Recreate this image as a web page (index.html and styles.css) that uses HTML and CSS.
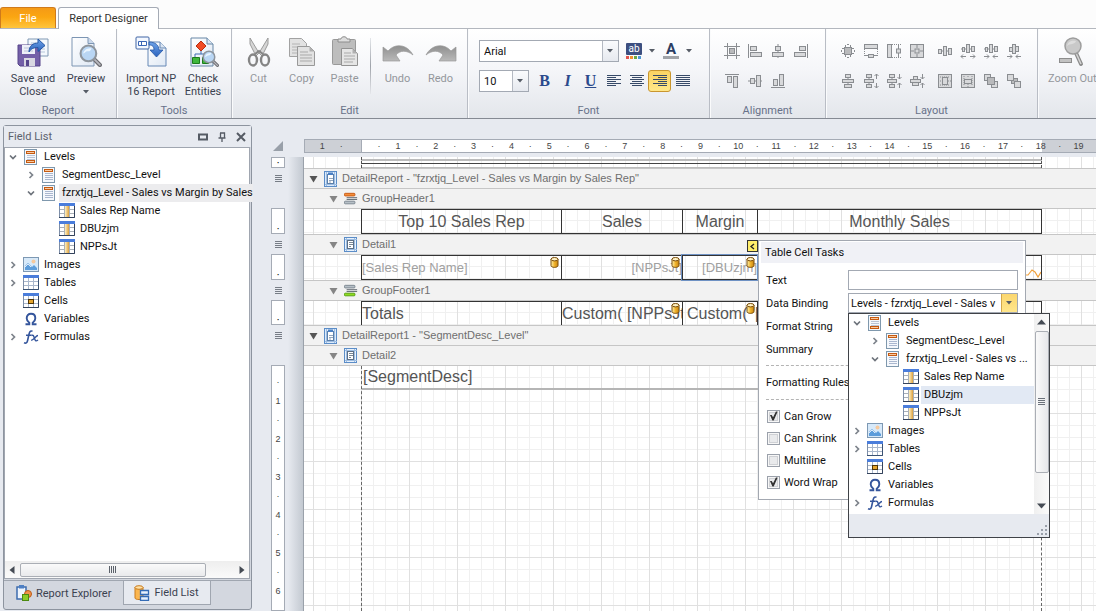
FILE: index.html
```html
<!DOCTYPE html>
<html lang="en">
<head>
<meta charset="utf-8">
<title>Report Designer</title>
<link rel="stylesheet" href="styles.css">
</head>
<body>
<svg class="defs" aria-hidden="true">
  <defs>
    <linearGradient id="gBlue" x1="0" y1="0" x2="0" y2="1"><stop offset="0" stop-color="#6fa4ea"/><stop offset="1" stop-color="#2a62bd"/></linearGradient>
    <linearGradient id="gPage" x1="0" y1="0" x2="1" y2="1"><stop offset="0" stop-color="#fff"/><stop offset="1" stop-color="#dfe8f4"/></linearGradient>
    <linearGradient id="gGold" x1="0" y1="0" x2="1" y2="0"><stop offset="0" stop-color="#fff3b0"/><stop offset=".5" stop-color="#f0b32c"/><stop offset="1" stop-color="#c98512"/></linearGradient>
    <linearGradient id="gSand" x1="0" y1="0" x2="1" y2="0"><stop offset="0" stop-color="#fff0c0"/><stop offset="1" stop-color="#dca040"/></linearGradient>
    <linearGradient id="gGray" x1="0" y1="0" x2="0" y2="1"><stop offset="0" stop-color="#8f8f8f"/><stop offset="1" stop-color="#b9b9b9"/></linearGradient>
  </defs>
  <symbol id="levels" viewBox="0 0 16 16"><rect x="1.500" y=".5" width="12" height="15" fill="#f5f8fc" stroke="#7f98ad"/><path d="M4 6.500h8M4 8.500h8M4 10.500h8" stroke="#b9c4d6"/><rect x="3.500" y="2.500" width="8" height="2" fill="#f8c9a0" stroke="#c55a11"/><rect x="3.500" y="11.500" width="8" height="2" fill="#f8c9a0" stroke="#c55a11"/></symbol>
  <symbol id="level" viewBox="0 0 16 16"><rect x="1.500" y=".5" width="12" height="15" fill="#f5f8fc" stroke="#7f98ad"/><path d="M4 6.500h8M4 8.500h8M4 10.500h8M4 12.500h8" stroke="#aab7cf"/><rect x="3.500" y="2.500" width="8" height="2" fill="#f8c9a0" stroke="#c55a11"/></symbol>
  <symbol id="tbl" viewBox="0 0 16 16"><rect x=".5" y=".5" width="15" height="14" fill="#fff" stroke="#7d8ea8"/><path d="M1 6.500h14M1 10.500h14M5.500 3v12M10.500 3v12" stroke="#a9b7cc"/><path d="M15.500 3v11.500H0" fill="none" stroke="#3a5273"/><rect width="16" height="3" fill="#4a7ddb"/></symbol>
  <symbol id="col" viewBox="0 0 16 16"><rect x=".5" y=".5" width="15" height="14" fill="#fff" stroke="#7d8ea8"/><path d="M1 6.500h14M1 10.500h14M5.500 3v12M10.500 3v12" stroke="#a9b0b8"/><rect x="6" y="3" width="4" height="11" fill="url(#gSand)"/><path d="M15.500 3v11.500H0" fill="none" stroke="#34435c"/><rect width="16" height="3" fill="#4a7ddb"/></symbol>
  <symbol id="cell" viewBox="0 0 16 16"><rect x=".5" y=".5" width="15" height="14" fill="#fff" stroke="#7d8ea8"/><path d="M1 6.500h14M1 10.500h14M5.500 3v12M10.500 3v12" stroke="#a9b7cc"/><path d="M15.500 3v11.500H0" fill="none" stroke="#34435c"/><rect width="16" height="3" fill="#4a7ddb"/><rect x="5.500" y="6.500" width="5" height="4" fill="#e4a42d" stroke="#4f3508"/></symbol>
  <symbol id="img" viewBox="0 0 16 16"><rect x=".5" y=".5" width="15" height="14" fill="#d7e9f9" stroke="#7d98b3"/><circle cx="10.500" cy="4.500" r="2" fill="#f6c99d"/><path d="M2 13V9l3-3 4 4 2-2 3 3v2z" fill="#5d9ddb"/><path d="M2 10l3-3 3 3" fill="none" stroke="#fff" stroke-width=".8"/></symbol>
  <symbol id="omega" viewBox="0 0 16 16"><path d="M2.500 13.200h3.800v-1.500C4.500 10.500 3.700 9 3.700 7.200 3.700 4.500 5.500 2.800 8 2.800s4.300 1.700 4.300 4.400c0 1.800-.8 3.300-2.600 4.500v1.500h3.800" fill="none" stroke="#34559c" stroke-width="1.900"/></symbol>
  <symbol id="fx" viewBox="0 0 16 16"><path d="M9.500 2.300C7 1.300 6.400 3 5.800 6L4.600 11.500C4.100 14 3 14.600 1 13.800M3 6.300h5.500" fill="none" stroke="#34559c" stroke-width="1.600"/><path d="M8.500 6.500c2-1 2.200.5 3 3 .8 2.600 1.500 3 3.500 1.500M15 6.500c-2 0-4.500 5-6.800 4.800" fill="none" stroke="#34559c" stroke-width="1.400"/></symbol>
  <symbol id="open" viewBox="0 0 8 8"><path d="M1 2.500l3 3 3-3" fill="none" stroke="#6d737b" stroke-width="1.700"/></symbol>
  <symbol id="shut" viewBox="0 0 8 8"><path d="M2.500 1l3 3-3 3" fill="none" stroke="#7d838b" stroke-width="1.700"/></symbol>
  <symbol id="db" viewBox="0 0 9 11"><path d="M1 2v6.500C1 11 8 11 8 8.500V2" fill="url(#gGold)" stroke="#7a4c08"/><ellipse cx="4.500" cy="2.200" rx="3.500" ry="1.700" fill="#fff2c4" stroke="#7a4c08"/></symbol>
  <symbol id="down" viewBox="0 0 7 4"><path d="M0 0h6L3 3.500z" fill="#565c66"/></symbol>
  <symbol id="tri" viewBox="0 0 9 8"><path d="M.5 1h8L4.500 7.500z" fill="currentColor"/></symbol>
  <symbol id="report" viewBox="0 0 14 16"><rect x=".5" y=".5" width="12" height="15" fill="#dceafa" stroke="#5b8dc8"/><path d="M2.500 1v14M10.500 1v14M1 13.500h12" stroke="#9dbde2"/><rect x="3.500" y="3.500" width="6" height="9" fill="#fff" stroke="#5c7fa8"/><path d="M5 7.500h4M5 9.500h4M5 11h2" stroke="#7790ad" stroke-width=".8"/><rect x="4" y="1.500" width="5" height="2.500" fill="#4a80c4"/></symbol>
  <symbol id="detail" viewBox="0 0 14 16"><rect x=".5" y=".5" width="12" height="14" fill="#e8f1fb" stroke="#5b8dc8"/><path d="M2.500 1v13M10.500 1v13M1 2.500h12M1 12.500h12" stroke="#9dbde2"/><rect x="3.500" y="3.500" width="6" height="8" fill="#fff" stroke="#5c6e84"/><path d="M5 5.500h4M5 7.500h4M5 9.500h2" stroke="#7a8794"/></symbol>
  <symbol id="ghead" viewBox="0 0 16 14"><rect x=".5" y=".5" width="12" height="3" rx="1" fill="#f38f3c" stroke="#c5520c"/><path d="M3 5.500h12M3 7.500h12" stroke="#4f5860"/><rect x=".5" y="9.500" width="12" height="3" rx="1" fill="#b6bfc6" stroke="#75808a"/></symbol>
  <symbol id="gfoot" viewBox="0 0 16 14"><rect x=".5" y=".5" width="12" height="3" rx="1" fill="#b6bfc6" stroke="#75808a"/><path d="M3 5.500h12M3 7.500h12" stroke="#4f5860"/><rect x=".5" y="9.500" width="12" height="3" rx="1" fill="#8fdc1f" stroke="#4f9908"/></symbol>
  <symbol id="lens" viewBox="0 0 22 22"><path d="M14 14l6 6" stroke="#6f6f74" stroke-width="4" stroke-linecap="round"/><path d="M14 14l6 6" stroke="#b9b9bf" stroke-width="1.500" stroke-linecap="round"/><circle cx="9" cy="9" r="7.500" fill="#b9d6f4" stroke="#8e959d" stroke-width="2"/><path d="M4 9c1-4 4-5 8-5-1 3-2 3-4 3s-2 2-4 2z" fill="#eaf5ff"/></symbol>
</svg>

<nav class="tabs">
  <button class="tab tab-file">File</button>
  <button class="tab tab-active">Report Designer</button>
</nav>

<header class="ribbon">
  <section class="group g-report">
    <div class="tools">
      <button class="big w60"><svg class="i32" viewBox="0 0 32 32"><path d="M11 3h20v17H11z" fill="#f4f8fd" stroke="#8099b4"/><path d="M14 7h5M14 10h14M14 13h14M14 16h14" stroke="#b7c7da"/><path d="M1 9h19l3 3v18H3l-2-2z" fill="#7460a8" stroke="#57458a"/><path d="M5 9h13v9H5z" fill="#eef0f8"/><path d="M7 12h9M7 15h9" stroke="#bcc2d6"/><path d="M7 22h11v8H7z" fill="#d9d8e2"/><path d="M9 24h3v6H9z" fill="#58478c"/><path d="M12 16c0-6 4-9 9-9V3l7 6.500-7 6v-4c-4 0-7 1-9 4.500z" fill="url(#gBlue)" stroke="#2457a5"/></svg>Save and<br>Close</button>
      <button class="big w46"><svg class="i32" viewBox="0 0 32 32"><path d="M2 1.500h16l6 6V30H2z" fill="url(#gPage)" stroke="#7c95b3"/><path d="M18 1.500v6h6" fill="#cbd9ec" stroke="#7c95b3"/><use href="#lens" x="9" y="8" width="23" height="23"/></svg>Preview<svg class="arrow mt" viewBox="0 0 7 4"><use href="#down"/></svg></button>
    </div>
    <h2>Report</h2>
  </section>
  <section class="group g-tools">
    <div class="tools">
      <button class="big w52"><svg class="i32" viewBox="0 0 32 32"><path d="M13 6h12l6 6v18H13z" fill="url(#gPage)" stroke="#6788b5"/><path d="M25 6v6h6" fill="#dbe5f2" stroke="#6788b5"/><rect x="1" y="1" width="13" height="12" rx="1" fill="#f4f8ff" stroke="#3f65a5"/><path d="M3.500 5.500h8v4h-8zM6.500 5.500v4" fill="#fff" stroke="#3a66b6"/><path d="M14 6c6 0 10 3 10 8h4l-6.500 7L15 14h4c0-3-1-5-5-5z" fill="url(#gBlue)" stroke="#2457a5" stroke-width=".8"/></svg>Import NP<br>16 Report</button>
      <button class="big w52"><svg class="i32" viewBox="0 0 32 32"><path d="M4 2h16l6 6v22H4z" fill="url(#gPage)" stroke="#6686a6"/><path d="M20 2v6h6" fill="#dbe5f2" stroke="#6686a6"/><path d="M14 14v4M8 22v-4h12v4" fill="none" stroke="#3e6db1"/><path d="M14 5l5 5-5 5-5-5z" fill="#f04b25" stroke="#b92d10"/><path d="M5.500 21.500h7v6h-7zM15.500 21.500h6v6h-6z" fill="#3fb73c" stroke="#1c7b1c"/><use href="#lens" x="15" y="14" width="17" height="17"/></svg>Check<br>Entities</button>
    </div>
    <h2>Tools</h2>
  </section>
  <section class="group g-edit">
    <div class="tools">
      <button class="big w43" disabled><svg class="i32" viewBox="0 0 32 32"><path d="M7 2l9 15-3 3L7 8zM25 2l-9 15 3 3 6-12z" fill="#d6d6d6" stroke="#9a9a9a"/><ellipse cx="10" cy="24" rx="4" ry="5.500" fill="none" stroke="#858585" stroke-width="2.400"/><ellipse cx="22" cy="24" rx="4" ry="5.500" fill="none" stroke="#858585" stroke-width="2.400"/><path d="M12 18l4-3 4 3" fill="none" stroke="#858585" stroke-width="2"/></svg>Cut</button>
      <button class="big w43" disabled><svg class="i32" viewBox="0 0 32 32"><path d="M3.500 2.500h12l5 5v13h-17z" fill="#e2e2e2" stroke="#a2a2a2"/><path d="M6 8h8M6 11h8M6 14h5M6 17h5" stroke="#b4b4b4"/><path d="M11.500 10.500h12l5 5v14h-17z" fill="#e2e2e2" stroke="#999"/><path d="M23.500 10.500v5h5z" fill="#b0b0b0"/><path d="M14 16h8M14 19h12M14 22h12M14 25h12" stroke="#a9a9a9"/></svg>Copy</button>
      <button class="big w43" disabled><svg class="i32" viewBox="0 0 32 32"><rect x="3.500" y="3.500" width="23" height="25" rx="1" fill="#bdbdbd" stroke="#999"/><path d="M9 6V3h3c0-3 6-3 6 0h3v3z" fill="#ddd" stroke="#8d8d8d"/><path d="M12.500 12.500h11l5 5v12h-16z" fill="#e5e5e5" stroke="#929292"/><path d="M23.500 12.500v5h5z" fill="#b0b0b0"/><path d="M15 17h7M15 20h11M15 23h11M15 26h9" stroke="#a9a9a9"/></svg>Paste</button>
      <span class="vsep"></span>
      <button class="big w43" disabled><svg class="i32" viewBox="0 0 32 32"><path d="M1 11l5 4c7-8 19-7 25 4-6-5-13-5-17 0l4 6H1z" fill="url(#gGray)" stroke="#999" stroke-width=".7"/></svg>Undo</button>
      <button class="big w43" disabled><svg class="i32" viewBox="0 0 32 32"><path d="M31 11l-5 4C19 7 7 8 1 19c6-5 13-5 17 0l-4 6h17z" fill="url(#gGray)" stroke="#999" stroke-width=".7"/></svg>Redo</button>
    </div>
    <h2>Edit</h2>
  </section>
  <section class="group g-font">
    <div class="rows">
      <div class="row">
        <span class="combo w140"><select aria-label="Font name"><option>Arial</option></select><i><svg class="arrow" viewBox="0 0 7 4"><use href="#down"/></svg></i></span>
        <button class="flat fill" aria-label="Background color"><span class="ab">ab</span><svg class="dots" viewBox="0 0 16 3"><path d="M0 0h3v3H0z" fill="#e2564d"/><path d="M4 0h3v3H4z" fill="#ef9130"/><path d="M8 0h3v3H8z" fill="#6ba740"/><path d="M12 0h3v3h-3z" fill="#4d97d4"/></svg></button>
        <button class="flat w9" aria-label="Background color options"><svg class="arrow" viewBox="0 0 7 4"><use href="#down"/></svg></button>
        <button class="flat fore" aria-label="Text color">A</button>
        <button class="flat w9" aria-label="Text color options"><svg class="arrow" viewBox="0 0 7 4"><use href="#down"/></svg></button>
      </div>
      <div class="row">
        <span class="combo w50"><select aria-label="Font size"><option>10</option></select><i><svg class="arrow" viewBox="0 0 7 4"><use href="#down"/></svg></i></span>
        <span class="marks"><button class="mark b">B</button><button class="mark it">I</button><button class="mark u">U</button><button class="mark" aria-label="Align left"><svg class="al" viewBox="0 0 14 12"><path d="M0 .5h14M0 2.500h9M0 4.500h14M0 6.500h9M0 8.500h14M0 10.500h9" stroke="#374a68"/></svg></button><button class="mark" aria-label="Center"><svg class="al" viewBox="0 0 14 12"><path d="M0 .5h14M2 2.500h10M0 4.500h14M2 6.500h10M0 8.500h14M2 10.500h10" stroke="#374a68"/></svg></button><button class="mark on" aria-label="Align right"><svg class="al" viewBox="0 0 14 12"><path d="M0 .5h14M5 2.500h9M0 4.500h14M5 6.500h9M0 8.500h14M5 10.500h9" stroke="#374a68"/></svg></button><button class="mark" aria-label="Justify"><svg class="al" viewBox="0 0 14 12"><path d="M0 .5h14M0 2.500h14M0 4.500h14M0 6.500h14M0 8.500h14M0 10.500h14" stroke="#374a68"/></svg></button></span>
      </div>
    </div>
    <h2>Font</h2>
  </section>
  <section class="group g-align">
    <div class="icons">
      <button disabled aria-label="Align to grid"><svg viewBox="0 0 16 16"><path d="M3.500 0v16M12.500 0v16M0 3.500h16M0 12.500h16"/><rect class="deep" x="5.500" y="5.500" width="5" height="5"/></svg></button>
      <button disabled aria-label="Align lefts"><svg viewBox="0 0 16 16"><path d="M1.500 1v14"/><rect x="3.500" y="3.500" width="6" height="4"/><rect x="3.500" y="9.500" width="11" height="4"/></svg></button>
      <button disabled aria-label="Align centers"><svg viewBox="0 0 16 16"><path d="M8 1v14"/><rect x="5.500" y="3.500" width="5" height="4"/><rect x="2.500" y="9.500" width="11" height="4"/></svg></button>
      <button disabled aria-label="Align rights"><svg viewBox="0 0 16 16"><path d="M14.500 1v14"/><rect x="6.500" y="3.500" width="6" height="4"/><rect x="1.500" y="9.500" width="11" height="4"/></svg></button>
    </div>
    <div class="icons">
      <button disabled aria-label="Align tops"><svg viewBox="0 0 16 16"><path d="M1 1.500h14"/><rect x="3.500" y="3.500" width="4" height="6"/><rect x="9.500" y="3.500" width="4" height="11"/></svg></button>
      <button disabled aria-label="Align middles"><svg viewBox="0 0 16 16"><path d="M1 8h14"/><rect x="3.500" y="5.500" width="4" height="5"/><rect x="9.500" y="2.500" width="4" height="11"/></svg></button>
      <button disabled aria-label="Align bottoms"><svg viewBox="0 0 16 16"><path d="M1 14.500h14"/><rect x="3.500" y="6.500" width="4" height="6"/><rect x="9.500" y="1.500" width="4" height="11"/></svg></button>
    </div>
    <h2>Alignment</h2>
  </section>
  <section class="group g-layout">
    <div class="icons">
      <button disabled aria-label="Size to grid"><svg viewBox="0 0 16 16"><path d="M5.500 2v12M10.500 2v12M2 5.500h12M2 10.500h12M7 1.500h2M7 14.500h2M1.500 7v2M14.500 7v2"/><rect class="deep" x="4.500" y="4.500" width="7" height="7"/></svg></button>
      <button disabled aria-label="Same width"><svg viewBox="0 0 16 16"><rect x="1.500" y="1.500" width="13" height="4"/><path d="M1.500 6v8M14.500 6v8" stroke-dasharray="1 1"/><rect x="5.500" y="11.500" width="5" height="3"/><path d="M2 12.500h3M11 12.500h3"/></svg></button>
      <button disabled aria-label="Same height"><svg viewBox="0 0 16 16"><rect x="1.500" y="1.500" width="4" height="13"/><path d="M6 1.500h9M6 14.500h9" stroke-dasharray="1 1"/><rect x="10.500" y="6" width="4" height="4"/><path d="M12.500 2v4M12.500 10v4"/></svg></button>
      <button disabled aria-label="Same size"><svg viewBox="0 0 16 16"><rect x="1.500" y="1.500" width="13" height="13"/><rect x="6" y="6" width="4" height="4"/><path d="M8 2v3M8 11v3M2 8h3M11 8h3"/></svg></button>
      <span></span>
      <button disabled aria-label="Equal horizontal spacing"><svg viewBox="0 0 16 16"><path d="M1 8h14"/><rect x="1.500" y="6.500" width="3" height="4"/><rect x="6.500" y="3.500" width="3" height="9"/><rect x="11.500" y="5.500" width="3" height="6"/></svg></button>
      <button disabled aria-label="Increase horizontal spacing"><svg viewBox="0 0 16 16"><path d="M1 6h14"/><rect x="2.500" y="4.500" width="2" height="4"/><rect x="6.500" y="1.500" width="3" height="8"/><rect x="11.500" y="3.500" width="3" height="5"/><path d="M1 13.500h5M10 13.500h5M3 11.500l-2 2 2 2M13 11.500l2 2-2 2"/></svg></button>
      <button disabled aria-label="Decrease horizontal spacing"><svg viewBox="0 0 16 16"><path d="M1 6h14"/><rect x="2.500" y="4.500" width="2" height="4"/><rect x="6.500" y="1.500" width="3" height="8"/><rect x="11.500" y="3.500" width="3" height="5"/><path d="M1 13.500h5M10 13.500h5M4 11.500l2 2-2 2M12 11.500l-2 2 2 2"/></svg></button>
      <button disabled aria-label="Remove horizontal spacing"><svg viewBox="0 0 16 16"><rect x="3.500" y="4.500" width="3" height="4"/><rect x="6.500" y="1.500" width="3" height="9"/><rect x="9.500" y="3.500" width="3" height="5"/><path d="M1 13.500h5M10 13.500h5M4 11.500l2 2-2 2M12 11.500l-2 2 2 2"/></svg></button>
    </div>
    <div class="icons">
      <button disabled aria-label="Equal vertical spacing"><svg viewBox="0 0 16 16"><path d="M8 1v14"/><rect x="5.500" y="1.500" width="5" height="3"/><rect x="2.500" y="6.500" width="11" height="3"/><rect x="4.500" y="11.500" width="7" height="3"/></svg></button>
      <button disabled aria-label="Increase vertical spacing"><svg viewBox="0 0 16 16"><path d="M6 2v12"/><rect x="3.500" y="1.500" width="5" height="3"/><rect x="1.500" y="6.500" width="9" height="3"/><rect x="3.500" y="11.500" width="5" height="3"/><path d="M13.500 1v5M13.500 10v5M11.500 3l2-2 2 2M11.500 13l2 2 2-2"/></svg></button>
      <button disabled aria-label="Decrease vertical spacing"><svg viewBox="0 0 16 16"><path d="M6 2v12"/><rect x="3.500" y="1.500" width="5" height="3"/><rect x="1.500" y="6.500" width="9" height="3"/><rect x="3.500" y="11.500" width="5" height="3"/><path d="M13.500 1v5M13.500 10v5M11.500 4l2 2 2-2M11.500 12l2-2 2 2"/></svg></button>
      <button disabled aria-label="Remove vertical spacing"><svg viewBox="0 0 16 16"><rect x="4.500" y="3.500" width="4" height="3"/><rect x="1.500" y="6.500" width="10" height="3"/><rect x="3.500" y="9.500" width="6" height="3"/><path d="M13.500 1v5M13.500 10v5M11.500 4l2 2 2-2M11.500 12l2-2 2 2"/></svg></button>
      <span></span>
      <button disabled aria-label="Center horizontally"><svg viewBox="0 0 16 16"><rect x="1.500" y="1.500" width="13" height="13"/><path d="M1 8h4M11 8h4M3 4h10M3 12h10" stroke-dasharray="1 1"/><rect x="5.500" y="4.500" width="5" height="7"/></svg></button>
      <button disabled aria-label="Center vertically"><svg viewBox="0 0 16 16"><rect x="1.500" y="1.500" width="13" height="13"/><path d="M8 1v4M8 11v4M4 3v10M12 3v10" stroke-dasharray="1 1"/><rect x="4.500" y="6.500" width="7" height="4"/></svg></button>
      <button disabled aria-label="Bring to front"><svg viewBox="0 0 16 16"><rect x="1.500" y="1.500" width="6" height="6"/><rect x="8.500" y="8.500" width="6" height="6"/><rect class="deep" x="4.500" y="4.500" width="7" height="7"/></svg></button>
      <button disabled aria-label="Send to back"><svg viewBox="0 0 16 16"><rect class="deep" x="5.500" y="5.500" width="6" height="5"/><rect x="1.500" y="1.500" width="6" height="6"/><rect x="8.500" y="8.500" width="6" height="6"/></svg></button>
    </div>
    <h2>Layout</h2>
  </section>
  <section class="group g-zoom">
    <div class="tools">
      <button class="big" disabled><svg class="i32" viewBox="0 0 32 32"><path d="M20 17l5 11" stroke="#8b8b8b" stroke-width="4" stroke-linecap="round"/><path d="M20 17l5 11" stroke="#d5d5d5" stroke-width="1.500"/><circle cx="17" cy="10" r="8" fill="#c9c9c9" stroke="#9d9d9d" stroke-width="1.500"/><path d="M11 10c1-5 5-6 9-5-1 4-6 2-9 5z" fill="#ddd"/><rect x="3.500" y="22.500" width="12" height="4" fill="#c2c2c2" stroke="#8d8d8d"/></svg>Zoom Out</button>
    </div>
  </section>
</header>

<main class="work">
  <aside class="panel">
    <div class="panel-head"><h1>Field List</h1>
      <button aria-label="Maximize"><svg viewBox="0 0 10 10"><path d="M1 2.500h8v5H1z" fill="none" stroke="#555b64" stroke-width="2"/></svg></button>
      <button aria-label="Pin"><svg viewBox="0 0 10 10"><path d="M3 1h4.500v5M3.500 1v5M1.500 6h7M5 6v4" fill="none" stroke="#555b64" stroke-width="1.300"/></svg></button>
      <button aria-label="Close"><svg viewBox="0 0 10 10"><path d="M1 1l8 8M9 1L1 9" stroke="#555b64" stroke-width="2"/></svg></button>
    </div>
    <div class="tree-box">
      <ul class="tree">
        <li class="l1"><svg class="tw"><use href="#open"/></svg><svg class="ic"><use href="#levels"/></svg><span>Levels</span></li>
        <li class="l2"><svg class="tw"><use href="#shut"/></svg><svg class="ic"><use href="#level"/></svg><span>SegmentDesc_Level</span></li>
        <li class="l2"><svg class="tw"><use href="#open"/></svg><svg class="ic"><use href="#level"/></svg><span class="sel-gray">fzrxtjq_Level - Sales vs Margin by Sales</span></li>
        <li class="l3"><svg class="tw"></svg><svg class="ic"><use href="#col"/></svg><span>Sales Rep Name</span></li>
        <li class="l3"><svg class="tw"></svg><svg class="ic"><use href="#col"/></svg><span>DBUzjm</span></li>
        <li class="l3"><svg class="tw"></svg><svg class="ic"><use href="#col"/></svg><span>NPPsJt</span></li>
        <li class="l1"><svg class="tw"><use href="#shut"/></svg><svg class="ic"><use href="#img"/></svg><span>Images</span></li>
        <li class="l1"><svg class="tw"><use href="#shut"/></svg><svg class="ic"><use href="#tbl"/></svg><span>Tables</span></li>
        <li class="l1"><svg class="tw"></svg><svg class="ic"><use href="#cell"/></svg><span>Cells</span></li>
        <li class="l1"><svg class="tw"></svg><svg class="ic"><use href="#omega"/></svg><span>Variables</span></li>
        <li class="l1"><svg class="tw"><use href="#shut"/></svg><svg class="ic"><use href="#fx"/></svg><span>Formulas</span></li>
      </ul>
      <div class="hscroll">
        <svg class="sa" viewBox="0 0 6 8"><path d="M5.500 0v8L.5 4z" fill="#454b54"/></svg>
        <div class="htrack"><div class="hthumb"><svg class="grip" viewBox="0 0 8 7"><path d="M.5 0v7M2.500 0v7M4.500 0v7M6.500 0v7" stroke="#5c626b"/></svg></div></div>
        <svg class="sa" viewBox="0 0 6 8"><path d="M.5 0v8l5-4z" fill="#454b54"/></svg>
      </div>
    </div>
    <div class="ptabs">
      <button class="ptab"><svg class="i16" viewBox="0 0 16 16"><rect x="1" y="2" width="9" height="12" fill="#eef4fc" stroke="#3e6cae" stroke-width="1.500"/><rect x="3" y="0" width="5" height="3.500" fill="#4d7fc4"/><circle cx="12" cy="9" r="3.500" fill="#f0914c" stroke="#bb5c16"/><rect x="6.500" y="9.500" width="6" height="6" fill="#8ecb28" stroke="#4c8a10"/></svg>Report Explorer</button>
      <button class="ptab ptab-on"><svg class="i16" viewBox="0 0 16 16"><path d="M1 2v11c0 2 8 2 8 0V2" fill="#fbb64f" stroke="#c97a1c"/><ellipse cx="5" cy="2.500" rx="4" ry="1.800" fill="#ffe2a8" stroke="#c97a1c"/><path d="M6.500 5.500h8v4h-8zM6.500 11.500h8v4h-8z" fill="#e9f2fd" stroke="#336bb5" stroke-width="1.300"/></svg>Field List</button>
    </div>
  </aside>

  <section class="designer">
    <div class="ruler-row">
      <svg class="corner" viewBox="0 0 10 10"><path d="M10 0v10H0z" fill="#99a0a9"/></svg>
      <div class="ruler"><div class="ticks"><b>·</b><b>1</b><b>·</b><b></b><b>·</b><b>1</b><b>·</b><b>2</b><b>·</b><b>3</b><b>·</b><b>4</b><b>·</b><b>5</b><b>·</b><b>6</b><b>·</b><b>7</b><b>·</b><b>8</b><b>·</b><b>9</b><b>·</b><b>10</b><b>·</b><b>11</b><b>·</b><b>12</b><b>·</b><b>13</b><b>·</b><b>14</b><b>·</b><b>15</b><b>·</b><b>16</b><b>·</b><b>17</b><b>·</b><b>18</b><b>·</b><b>19</b></div></div>
    </div>
    <div class="canvas">
      <div class="band h11"><div class="gut"><div class="vr">·</div></div><div class="body"><div class="strip"></div></div></div>

      <div class="band h20"><div class="gut"><i class="ham"></i></div><div class="bh"><svg class="tr dark"><use href="#tri"/></svg><svg class="bi"><use href="#report"/></svg>DetailReport - "fzrxtjq_Level - Sales vs Margin by Sales Rep"</div></div>
      <div class="band h20"><div class="gut"></div><div class="bh sub"><svg class="tr"><use href="#tri"/></svg><svg class="bi"><use href="#ghead"/></svg>GroupHeader1</div></div>
      <div class="band h26"><div class="gut"><div class="vr">·</div></div><div class="body"><table class="rt"><tr><td class="c1 mid">Top 10 Sales Rep</td><td class="c2 mid">Sales</td><td class="c3 mid">Margin</td><td class="mid">Monthly Sales</td></tr></table></div></div>

      <div class="band h20"><div class="gut"><i class="ham"></i></div><div class="bh sub"><svg class="tr"><use href="#tri"/></svg><svg class="bi"><use href="#detail"/></svg>Detail1</div></div>
      <div class="band h26"><div class="gut"><div class="vr">·</div></div><div class="body"><table class="rt faint"><tr><td class="c1">[Sales Rep Name]<svg class="dbi"><use href="#db"/></svg></td><td class="c2 end">[NPPsJt]<svg class="dbi"><use href="#db"/></svg></td><td class="c3 end">[DBUzjm]<svg class="dbi"><use href="#db"/></svg><span class="picked"></span></td><td class="end"><svg class="spark" viewBox="0 0 30 12"><path d="M0 8l5-4 4 5h5l3 0 4-5 3 2 3 5 3-5" fill="none" stroke="#f0a13c" stroke-width="1.200"/></svg></td></tr></table></div></div>

      <div class="band h20"><div class="gut"><i class="ham"></i></div><div class="bh sub"><svg class="tr"><use href="#tri"/></svg><svg class="bi"><use href="#gfoot"/></svg>GroupFooter1</div></div>
      <div class="band h25"><div class="gut"><div class="vr">·</div></div><div class="body"><table class="rt"><tr><td class="c1">Totals</td><td class="c2">Custom( [NPPsJt]<svg class="dbi"><use href="#db"/></svg></td><td class="c3 pad">Custom( '[DBUzjm]<svg class="dbi"><use href="#db"/></svg></td><td></td></tr></table></div></div>

      <div class="band h20"><div class="gut"><i class="ham"></i></div><div class="bh"><svg class="tr dark"><use href="#tri"/></svg><svg class="bi"><use href="#report"/></svg>DetailReport1 - "SegmentDesc_Level"</div></div>
      <div class="band h20"><div class="gut"></div><div class="bh sub"><svg class="tr"><use href="#tri"/></svg><svg class="bi"><use href="#detail"/></svg>Detail2</div></div>
      <div class="band rest"><div class="gut"><div class="vr long"><b>·</b><b>1</b><b>·</b><b>2</b><b>·</b><b>3</b><b>·</b><b>4</b><b>·</b><b>5</b><b>·</b><b>6</b></div></div><div class="body"><div class="page"><div class="seg">[SegmentDesc]</div></div></div></div>

      <button class="smart" aria-label="Close tasks"><svg viewBox="0 0 9 9"><path d="M6 2L3 4.500 6 7" fill="none" stroke="#222" stroke-width="1.300"/></svg></button>
      <form class="tasks">
        <h2>Table Cell Tasks</h2>
        <div class="fields">
          <label for="text">Text</label><input id="text" type="text">
          <label for="binding">Data Binding</label><span class="combo hot"><select id="binding"><option>Levels - fzrxtjq_Level - Sales v</option></select><i><svg class="arrow" viewBox="0 0 7 4"><use href="#down"/></svg></i></span>
          <label for="fmt">Format String</label><input id="fmt" type="text">
          <label for="sum">Summary</label><input id="sum" type="text">
        </div>
        <div class="rules">Formatting Rules</div>
        <label class="check"><input type="checkbox" checked>Can Grow</label>
        <label class="check"><input type="checkbox">Can Shrink</label>
        <label class="check"><input type="checkbox">Multiline</label>
        <label class="check"><input type="checkbox" checked>Word Wrap</label>
      </form>

      <div class="drop">
        <div class="drop-main">
          <ul class="tree">
            <li class="l1"><svg class="tw"><use href="#open"/></svg><svg class="ic"><use href="#levels"/></svg><span>Levels</span></li>
            <li class="l2"><svg class="tw"><use href="#shut"/></svg><svg class="ic"><use href="#level"/></svg><span>SegmentDesc_Level</span></li>
            <li class="l2"><svg class="tw"><use href="#open"/></svg><svg class="ic"><use href="#level"/></svg><span>fzrxtjq_Level - Sales vs ...</span></li>
            <li class="l3"><svg class="tw"></svg><svg class="ic"><use href="#col"/></svg><span>Sales Rep Name</span></li>
            <li class="l3"><svg class="tw"></svg><svg class="ic"><use href="#col"/></svg><span class="sel-blue">DBUzjm</span></li>
            <li class="l3"><svg class="tw"></svg><svg class="ic"><use href="#col"/></svg><span>NPPsJt</span></li>
            <li class="l1"><svg class="tw"><use href="#shut"/></svg><svg class="ic"><use href="#img"/></svg><span>Images</span></li>
            <li class="l1"><svg class="tw"><use href="#shut"/></svg><svg class="ic"><use href="#tbl"/></svg><span>Tables</span></li>
            <li class="l1"><svg class="tw"></svg><svg class="ic"><use href="#cell"/></svg><span>Cells</span></li>
            <li class="l1"><svg class="tw"></svg><svg class="ic"><use href="#omega"/></svg><span>Variables</span></li>
            <li class="l1"><svg class="tw"><use href="#shut"/></svg><svg class="ic"><use href="#fx"/></svg><span>Formulas</span></li>
          </ul>
          <div class="vscroll">
            <svg class="va" viewBox="0 0 9 6"><path d="M0 5.500h9L4.500 .5z" fill="#454b54"/></svg>
            <div class="vthumb"><svg class="vgrip" viewBox="0 0 7 8"><path d="M0 .5h7M0 2.500h7M0 4.500h7M0 6.500h7" stroke="#6b717a"/></svg></div>
            <svg class="va" viewBox="0 0 9 6"><path d="M0 .5h9L4.500 5.500z" fill="#454b54"/></svg>
          </div>
        </div>
        <div class="drop-foot"><svg class="size" viewBox="0 0 10 10"><path d="M8 0h2v2H8zM4 4h2v2H4zM8 4h2v2H8zM0 8h2v2H0zM4 8h2v2H4zM8 8h2v2H8z" fill="#9aa0aa"/></svg></div>
      </div>
    </div>
  </section>
</main>
</body>
</html>
```
FILE: styles.css
```css
* { box-sizing: border-box; }
body {
  margin: 0;
  height: 100vh;
  display: flex;
  flex-direction: column;
  overflow: hidden;
  background: #e7eaf0;
  color: #111;
  font: 11px/13px Roboto, "Liberation Sans", Arial, sans-serif;
}
button, input, select { font: inherit; color: inherit; margin: 0; padding: 0; }
button { border: 0; background: none; }
h1, h2 { margin: 0; font: inherit; }
ul { margin: 0; padding: 0; list-style: none; }
svg { display: block; flex: none; }
.defs { position: absolute; width: 0; height: 0; }

/* Ribbon tabs */
.tabs {
  flex: none;
  display: flex;
  align-items: flex-end;
  gap: 2px;
  height: 28px;
  background: #fcfcfc;
}
.tab { height: 21px; border-radius: 3px 3px 0 0; }
.tab-file {
  width: 56px;
  color: #fff;
  border: 1px solid #cf7a1b;
  border-bottom: 0;
  background: linear-gradient(#f59a16, #fba611 45%, #ffc53c);
}
.tab-active {
  width: 101px;
  height: 22px;
  margin-bottom: -1px;
  z-index: 1;
  color: #333;
  background: #fff;
  border: 1px solid #a5abb5;
  border-bottom: 0;
}

/* Ribbon */
.ribbon {
  flex: none;
  display: flex;
  height: 91px;
  border-top: 1px solid #b3b7be;
  border-bottom: 1px solid #858a93;
  background: linear-gradient(#fff, #f5f6f9 45%, #e3e6eb);
}
.group {
  flex: none;
  display: flex;
  flex-direction: column;
  border-right: 1px solid #b9bdc5;
  box-shadow: 1px 0 #fafbfc;
}
.group h2 { margin-top: auto; padding-bottom: 1px; text-align: center; color: #68728a; }
.tools { display: flex; padding-top: 7px; }
.g-report { width: 117px; }
.g-report .tools { padding-left: 3px; }
.g-tools { width: 115px; }
.g-tools .tools { padding-left: 8px; }
.g-edit { width: 236px; }
.g-edit .tools { padding-left: 5px; }
.g-font { width: 242px; }
.g-align { width: 116px; }
.g-layout { width: 212px; }
.g-zoom { flex: 1; border: 0; overflow: hidden; }
.g-zoom .tools { padding-left: 10px; }
.big {
  flex: none;
  display: flex;
  flex-direction: column;
  align-items: center;
  justify-content: flex-start;
  white-space: nowrap;
  color: #3b4250;
}
.big:disabled { color: #94979c; }
.i32 { width: 32px; height: 32px; margin-bottom: 4px; }
.w60 { width: 60px; }
.w46 { width: 46px; }
.w52 { width: 52px; }
.w43 { width: 43px; }
.big:has(br) { display: block; }
.big:has(br) .i32 { margin: 0 auto 4px; }
.arrow { width: 7px; height: 4px; }
.mt { margin-top: 5px; }
.vsep { width: 1px; height: 56px; margin: 2px 5px 0 4px; background: linear-gradient(#e5e7eb, #9fa3aa 50%, #e5e7eb); }

.rows { display: flex; flex-direction: column; gap: 8px; padding: 11px 0 0 11px; }
.row { display: flex; align-items: center; height: 22px; }
.combo { display: flex; position: relative; height: 22px; border: 1px solid #a3a9b3; background: #fff; }
.combo select { flex: 1; min-width: 0; border: 0; padding-left: 4px; appearance: none; background: none; color: #111; outline: 0; }
.combo i {
  position: absolute;
  inset: 0 0 0 auto;
  width: 16px;
  display: grid;
  place-items: center;
  border-left: 1px solid #b4b9c2;
  background: linear-gradient(#fafbfd, #e6e9ef);
  pointer-events: none;
}
.w140 { width: 140px; }
.w50 { width: 50px; }
.fill { width: 16px; margin-left: 7px; }
.ab { display: block; height: 12px; background: #3d4f80; color: #fff; border-radius: 1px; font-size: 10px; line-height: 11px; }
.dots { width: 16px; height: 3px; margin-top: 1px; }
.w9 { width: 21px; display: grid; place-items: center; }
.fore { width: 16px; color: #2c3d63; font-size: 15px; font-weight: bold; line-height: 13px; border-bottom: 3px solid #a0a3a8; }
.marks { display: flex; margin-left: 4px; }
.mark { width: 23px; height: 22px; display: grid; place-items: center; color: #2b4a8c; font: bold 16px/20px "Liberation Serif", serif; }
.it { font-style: italic; }
.u { text-decoration: underline; }
.on { border: 1px solid #c9962f; border-radius: 3px; background: linear-gradient(#fbd362, #ffe789); }
.al { width: 14px; height: 12px; }

.icons { display: flex; gap: 7px; padding: 14px 0 0 14px; height: 30px; }
.icons + .icons { height: 32px; }
.icons svg { width: 16px; height: 16px; stroke: #8a8d91; fill: #d8d9db; }
.icons path { fill: none; }
.icons .deep { fill: #b9babc; }
.icons span { width: 1px; margin-right: -3px; }
.icons button { flex: none; width: 16px; height: 16px; }

/* Workspace */
.work { flex: 1; min-height: 0; display: flex; }
.panel {
  flex: none;
  width: 249px;
  margin: 6px 0 1px 3px;
  display: flex;
  flex-direction: column;
  border: 1px solid #8d949f;
  border-radius: 3px;
  background: #d3d7df;
}
.panel-head { display: flex; align-items: center; gap: 9px; height: 21px; padding: 0 5px 0 4px; background: #e7eaf0; color: #5b616d; }
.panel-head h1 { flex: 1; }
.panel-head svg { width: 10px; height: 10px; }
.tree-box { flex: 1; margin: 0 1px 0 0; min-height: 0; display: flex; flex-direction: column; border: 1px solid #a0a6b0; background: #fff; }
.tree { flex: 1; min-width: 0; }
.tree li { display: flex; align-items: center; height: 18px; white-space: nowrap; color: #111; }
.tw { width: 8px; height: 8px; margin-right: 6px; }
.ic { width: 16px; height: 16px; margin-right: 2px; }
.tree span { height: 18px; line-height: 18px; padding-left: 3px; }
.l1 { padding-left: 4px; }
.l2 { padding-left: 22px; }
.l3 { padding-left: 40px; }
.sel-gray { flex: 1; background: #ececee; }
.sel-blue { flex: 1; background: #e2e9f4; }
.hscroll { flex: none; display: flex; align-items: center; gap: 5px; height: 17px; padding: 0 4px; background: linear-gradient(#eee, #fafafa); }
.sa { width: 6px; height: 8px; }
.htrack { flex: 1; }
.hthumb { width: 87%; height: 14px; display: grid; place-items: center; border: 1px solid #aaaeb5; border-radius: 2px; background: linear-gradient(#fafafa, #e9eaec); }
.grip { width: 8px; height: 7px; }
.ptabs { flex: none; display: flex; height: 29px; margin-top: 1px; border-top: 1px solid #a0a6b0; }
.ptab { display: flex; align-items: center; gap: 4px; height: 24px; padding: 0 12px; color: #3b4250; }
.ptab-on { padding: 0 12px 0 10px; border: 1px solid #a0a6b0; border-top: 0; background: #e7eaf0; }
.i16 { width: 16px; height: 16px; }

/* Designer */
.designer { flex: 1; min-width: 0; display: flex; flex-direction: column; padding-top: 20px; font-family: "Liberation Sans", Arial, sans-serif; }
.ruler-row { flex: none; display: flex; align-items: center; height: 14px; }
.corner { width: 10px; height: 10px; margin: 0 21px; }
.ruler {
  flex: 1;
  min-width: 0;
  height: 14px;
  overflow: hidden;
  border: 1px solid #a5abb5;
  border-right: 0;
  background: linear-gradient(90deg, #cdd0d6 56px, #a5abb5 56px 57px, #fff 57px 737px, #cdd0d6 737px);
}
.ticks { display: grid; grid-template-columns: repeat(42, 1fr); width: 794px; margin-left: -11px; }
.ticks b, .long b { font-weight: normal; font-size: 9px; line-height: 12px; text-align: center; color: #444; }
.canvas { flex: 1; min-height: 0; position: relative; display: flex; flex-direction: column; margin-top: 4px; }
.band { flex: none; display: grid; grid-template-columns: 52px minmax(0, 1fr); }
.h11 { height: 11px; }
.h20 { height: 20px; }
.h25 { height: 25px; }
.h26 { height: 26px; }
.rest { flex: 1; min-height: 0; overflow: hidden; }
.gut { min-height: 0; padding-left: 19px; background: linear-gradient(90deg, transparent 36px, #c3c9d1 51px, #9aa1aa 51px); }
.vr { width: 14px; height: 100%; display: grid; place-items: end center; border: 1px solid #a5abb5; background: #fff; line-height: 9px; }
.long { display: block; padding-top: 7px; }
.long b { display: block; height: 19px; line-height: 19px; }
.ham { display: block; width: 7px; height: 7px; margin: 7px 0 0 4px; background: repeating-linear-gradient(#777d86 0 1px, transparent 1px 2px); }
.bh {
  display: flex;
  align-items: center;
  padding-left: 5px;
  border-top: 1px solid #c6c6c6;
  background: #f2f2f2;
  color: #6f6f6f;
  white-space: nowrap;
}
.sub { padding-left: 25px; }
.tr { width: 9px; height: 8px; margin-right: 6px; color: #858585; }
.dark { color: #555; }
.bi { width: 14px; height: 16px; margin-right: 4px; }
.body {
  min-height: 0;
  padding-left: 57px;
  border-top: 1px solid #c6c6c6;
  background:
    linear-gradient(90deg, #e0e0e0 1px, transparent 1px) 9px 0 / 48px 48px,
    linear-gradient(#e0e0e0 1px, transparent 1px) 0 -1px / 48px 48px,
    linear-gradient(90deg, #f0f0f0 1px, transparent 1px) 9px 0 / 12px 12px,
    linear-gradient(#f0f0f0 1px, transparent 1px) 0 -1px / 12px 12px,
    #fff;
}
.h11 .body { border-top: 0; }
.strip { width: 681px; height: 11px; border: 1px dashed #555; border-width: 0 1px; background: linear-gradient(transparent 2px, #bbb 2px 4px, transparent 4px 6px, #444 6px 7px, transparent 7px 10px, #bbb 10px); }
.rt { table-layout: fixed; width: 681px; height: 24px; border-collapse: collapse; color: #555; font-size: 16px; line-height: 20px; }
.rt td { position: relative; height: 24px; padding: 0; border: 1px solid #333; overflow: hidden; white-space: nowrap; }
.rt .mid { text-align: center; }
.rt .end { text-align: right; }
.rt .c1 { width: 200px; }
.rt .c2 { width: 121px; }
.rt .c3 { width: 75px; overflow: visible; }
.rt .pad { padding-left: 4px; overflow: hidden; }
.faint { color: #a0a0a0; font-size: 13px; }
.dbi { position: absolute; top: 1px; right: 2px; width: 9px; height: 11px; }
.picked { position: absolute; inset: -2px -1px -2px -2px; border: 1px solid #6f92c4; }
.spark { display: inline-block; width: 30px; height: 12px; vertical-align: bottom; }
.page { width: 681px; height: 100%; border: 1px dashed #666; border-width: 0 1px; }
.seg { height: 24px; padding-left: 1px; border-bottom: 2px solid #b5b5b5; color: #555; font-size: 16px; line-height: 22px; }

/* Smart tag and its task form */
.smart { position: absolute; left: 495px; top: 83px; width: 11px; height: 12px; border: 1px solid #333; background: #ffee6b; }
.tasks, .drop { font-family: Roboto, "Liberation Sans", Arial, sans-serif; }
.tasks { position: absolute; left: 506px; top: 83px; width: 268px; height: 260px; padding: 0 7px; border: 1px solid #a3a8b1; background: #fff; }
.tasks h2 { height: 21px; margin: 1px -5px 7px; padding-left: 4px; line-height: 21px; background: #f0f1f6; }
.fields { display: grid; grid-template-columns: 82px 1fr; grid-auto-rows: 20px; gap: 3px 0; align-items: center; padding-bottom: 6px; border-bottom: 1px dashed #b4b4b4; }
.fields input { height: 20px; border: 1px solid #a3a9b3; }
.fields .combo { height: 20px; }
.fields .combo select { padding-left: 2px; }
.hot i { background: linear-gradient(#fbd76f, #ffe68c); border-color: #d4a84a; }
.rules { height: 34px; margin-bottom: 5px; line-height: 34px; border-bottom: 1px dashed #b4b4b4; }
.check { display: flex; align-items: center; gap: 4px; height: 22px; padding-left: 1px; }
.check input {
  appearance: none;
  display: grid;
  width: 13px;
  height: 13px;
  border: 1px solid #9ba1ab;
  background: #e9eaec;
  box-shadow: inset 0 0 0 1px #f7f7f7, inset 0 0 0 2px #cfd1d5;
}
.check input:checked::before {
  content: "";
  background: #333;
  clip-path: polygon(18% 40%, 34% 40%, 46% 62%, 72% 10%, 88% 10%, 52% 90%, 40% 90%);
}

/* Data binding drop-down */
.drop { position: absolute; left: 596px; top: 156px; width: 202px; height: 225px; display: flex; flex-direction: column; border: 1px solid #3f4247; background: #fff; }
.drop-main { flex: none; display: flex; height: 200px; }
.drop-foot { flex: 1; display: flex; align-items: flex-end; justify-content: flex-end; padding: 2px; background: #e7eaf0; }
.size { width: 10px; height: 10px; }
.vscroll { flex: none; width: 15px; display: flex; flex-direction: column; align-items: center; gap: 6px; padding: 5px 0; background: linear-gradient(90deg, #f0f0f0, #fafafa); }
.va { width: 9px; height: 6px; }
.vthumb { width: 14px; height: 142px; margin-bottom: auto; display: grid; place-items: center; border: 1px solid #aaaeb5; border-radius: 2px; background: linear-gradient(90deg, #fafafa, #e6e7ea); }
.vgrip { width: 7px; height: 8px; }
```
